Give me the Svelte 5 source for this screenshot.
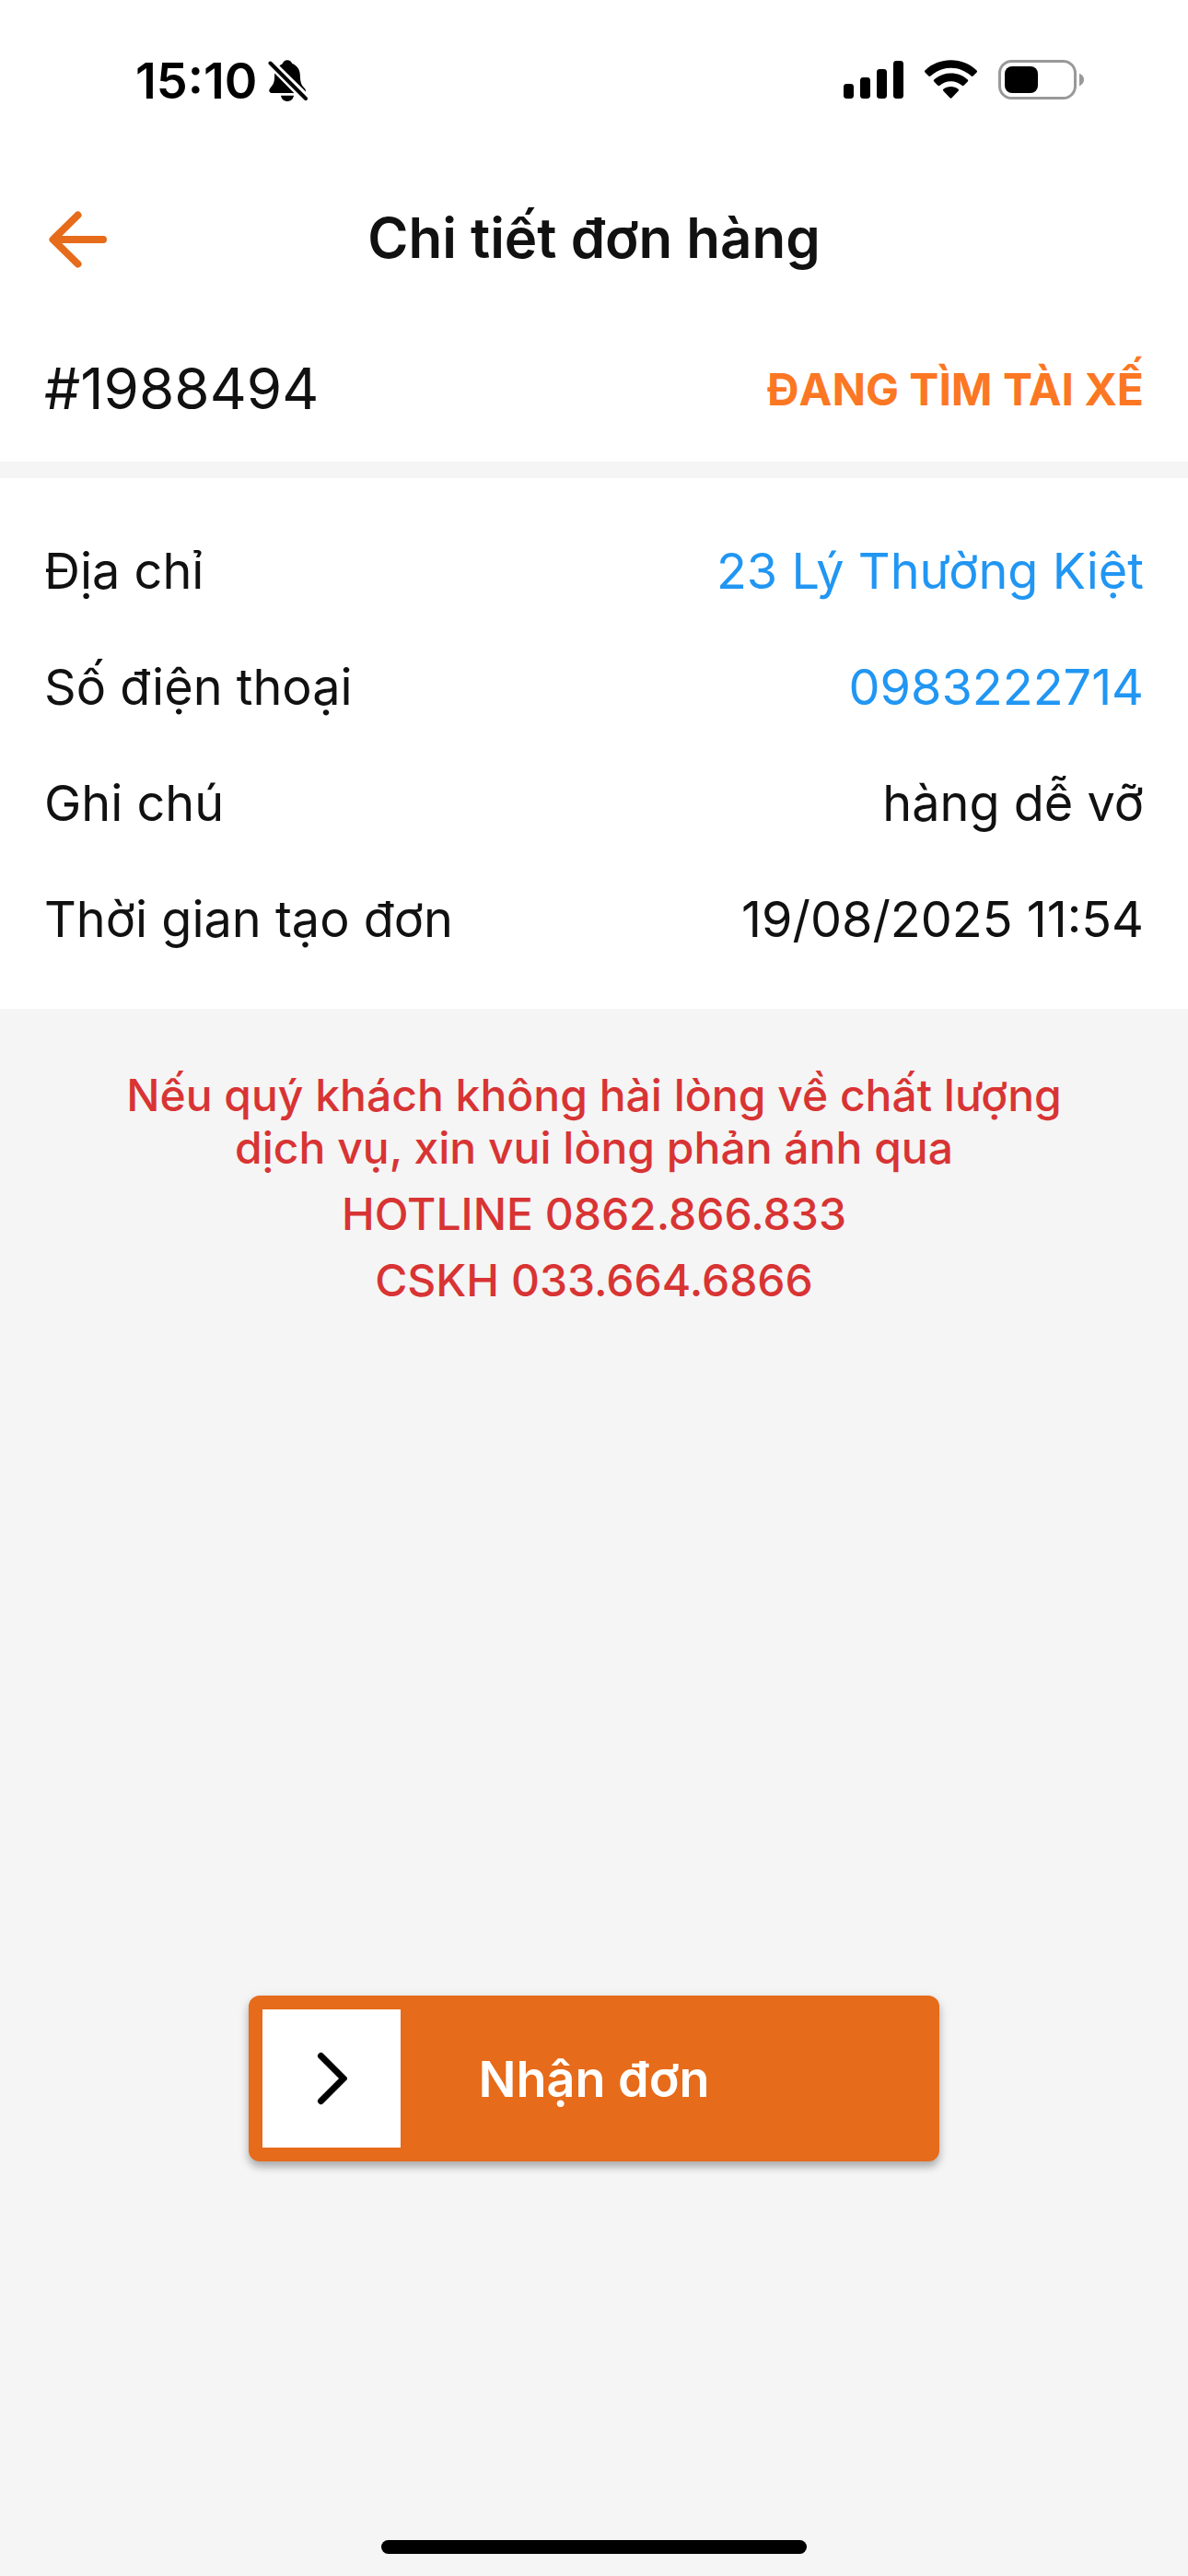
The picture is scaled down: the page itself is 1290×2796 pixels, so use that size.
<script lang="ts">
   interface OrderField {
      label: string;
      value: string;
      href?: string;
   }

   const orderId = "#1988494";
   const orderStatus = "ĐANG TÌM TÀI XẾ";

   const fields: OrderField[] = [
      { label: "Địa chỉ", value: "23 Lý Thường Kiệt", href: "#map" },
      { label: "Số điện thoại", value: "0983222714", href: "tel:0983222714" },
      { label: "Ghi chú", value: "hàng dễ vỡ" },
      { label: "Thời gian tạo đơn", value: "19/08/2025 11:54" },
   ];

   let accepted = $state(false);

   const goBack = (): void => history.back();
   const acceptOrder = (): void => {
      accepted = true;
   };
</script>

<div class="screen">
   <div class="status-bar">
      <div class="clock">
         <span>15:10</span>
         <svg width="44" height="48" viewBox="0 0 44 48" aria-hidden="true">
            <path
               d="M12.5 7.5 C14 6 15.2 5.6 15.8 5 C16.6 2.6 18.5 1.2 21 1.2 C23.5 1.2 25.4 2.6 26.2 5 C31.5 7 34.6 11.4 34.8 17 C35 23.5 35.6 27.5 38.5 30.5 C40.2 32.2 41.2 33.4 41 35.6 Z"
            />
            <path d="M7.2 15.6 L28.4 37 H4.4 C1.6 37 0.4 34.4 2 32.2 C4.4 29 6.6 27 7 21.5 Z" />
            <path d="M14 39.8 H28 C27.4 43.6 24.6 46 21 46 C17.4 46 14.6 43.6 14 39.8 Z" />
            <path d="M2.5 4.5 L41 43" class="slash" />
         </svg>
      </div>
      <div class="indicators">
         <svg width="66" height="44" viewBox="0 0 66 44" aria-hidden="true">
            <rect x="0" y="26" width="11" height="16" rx="3.4" />
            <rect x="18" y="19" width="11" height="23" rx="3.4" />
            <rect x="36" y="10" width="11" height="32" rx="3.4" />
            <rect x="54" y="1" width="11" height="41" rx="3.4" />
         </svg>
         <svg width="58" height="44" viewBox="0 0 58 44" aria-hidden="true">
            <path
               d="M28.5 0.2 C39.5 0.2 49.4 4.4 56.6 11.4 C57.2 12 57.2 12.8 56.6 13.4 L52.6 17.6 C52 18.2 51.2 18.2 50.6 17.6 C44.8 12.2 37.2 8.8 28.5 8.8 C19.8 8.8 12.2 12.2 6.4 17.6 C5.8 18.2 5 18.2 4.4 17.6 L0.4 13.4 C-0.2 12.8 -0.2 12 0.4 11.4 C7.6 4.4 17.5 0.2 28.5 0.2 Z"
            />
            <path
               d="M28.5 14.6 C35.6 14.6 42 17.2 46.8 21.6 C47.4 22.2 47.4 23 46.8 23.6 L42.6 27.8 C42 28.4 41.2 28.4 40.6 27.8 C37.4 25 33.2 23.2 28.5 23.2 C23.8 23.2 19.6 25 16.4 27.8 C15.8 28.4 15 28.4 14.4 27.8 L10.2 23.6 C9.6 23 9.6 22.2 10.2 21.6 C15 17.2 21.4 14.6 28.5 14.6 Z"
            />
            <path
               d="M28.5 29 C31.6 29 34.4 30 36.6 31.8 C37.2 32.4 37.2 33.2 36.6 33.8 L29.5 41.2 C28.9 41.8 28.1 41.8 27.5 41.2 L20.4 33.8 C19.8 33.2 19.8 32.4 20.4 31.8 C22.6 30 25.4 29 28.5 29 Z"
            />
         </svg>
         <svg width="94" height="44" viewBox="0 0 94 44" aria-hidden="true">
            <rect x="1.5" y="1.5" width="82" height="40" rx="13" class="battery-case" />
            <path d="M88 14.8 C91.4 16.2 93 18.4 93 21.5 C93 24.6 91.4 26.8 88 28.4 Z" class="battery-cap" />
            <rect x="7" y="7" width="36" height="29" rx="8" />
         </svg>
      </div>
   </div>

   <header>
      <button class="back" aria-label="Quay lại" onclick={goBack}>
         <svg width="64" height="62" viewBox="0 0 64 62" aria-hidden="true">
            <path d="M32.5 4.5 L5.5 31 L32.5 57.5 M7 31 H60" />
         </svg>
      </button>
      <h1>Chi tiết đơn hàng</h1>
   </header>

   <main>
      <section class="summary">
         <span class="order-id">{orderId}</span>
         <strong class="order-status">{orderStatus}</strong>
      </section>

      <dl class="details">
         {#each fields as { label, value, href }}
            <div class="row">
               <dt>{label}</dt>
               <dd>
                  {#if href}
                     <a {href}>{value}</a>
                  {:else}
                     {value}
                  {/if}
               </dd>
            </div>
         {/each}
      </dl>

      <div class="support">
         <p>Nếu quý khách không hài lòng về chất lượng dịch vụ, xin vui lòng phản ánh qua</p>
         <p>HOTLINE 0862.866.833</p>
         <p>CSKH 033.664.6866</p>
      </div>
   </main>

   <footer>
      <button class="accept" aria-pressed={accepted} onclick={acceptOrder}>
         <span class="thumb">
            <svg width="34" height="58" viewBox="0 0 34 58" aria-hidden="true">
               <path d="M5.5 4.5 L30 29 L5.5 53.5" />
            </svg>
         </span>
         <span class="accept-text">Nhận đơn</span>
      </button>
      <div class="home-indicator"></div>
   </footer>
</div>

<style>
   :global(body) {
      background: #f5f5f5;
   }

   .screen {
      display: flex;
      flex-direction: column;
      min-height: 100vh;
      color: #111;
      background: #f5f5f5;
      font-family: Inter, "Noto Sans", sans-serif;
   }

   .status-bar {
      display: flex;
      justify-content: space-between;
      align-items: center;
      height: 174px;
      box-sizing: border-box;
      padding: 0 112px 0 147px;
      color: #000;
      background: #fff;
   }

   .clock,
   .indicators {
      display: flex;
      align-items: center;
   }

   .clock {
      gap: 12px;
      padding-top: 2px;
      font-size: 54px;
      font-weight: 600;
      line-height: 66px;
   }

   .indicators {
      gap: 22px;
   }

   .slash {
      fill: none;
      stroke: #000;
      stroke-width: 4;
      stroke-linecap: round;
   }

   .battery-case {
      fill: none;
      stroke: #999;
      stroke-width: 3;
   }

   .battery-cap {
      fill: #999;
   }

   header {
      display: grid;
      grid-template-columns: 120px 1fr 120px;
      align-items: center;
      height: 168px;
      padding: 0 48px;
      background: #fff;
   }

   h1 {
      margin: 0;
      font-size: 60px;
      font-weight: 600;
      line-height: 72px;
      text-align: center;
   }

   button {
      border: 0;
      font: inherit;
      cursor: pointer;
   }

   .back {
      display: flex;
      justify-self: start;
      padding: 8px 4px 4px;
      background: none;
   }

   .back path {
      fill: none;
      stroke: #e66b1a;
      stroke-width: 8;
      stroke-linecap: round;
      stroke-linejoin: round;
   }

   .summary {
      display: flex;
      justify-content: space-between;
      align-items: center;
      height: 159px;
      padding: 0 48px;
      background: #fff;
   }

   .order-id {
      font-size: 62px;
      line-height: 72px;
   }

   .order-status {
      padding-top: 2px;
      color: #fc7723;
      font-size: 48px;
      font-weight: 700;
   }

   .details {
      margin: 18px 0 0;
      padding: 38px 48px 34px;
      background: #fff;
      font-size: 54px;
      font-weight: 400;
      line-height: 66px;
   }

   .row {
      display: flex;
      justify-content: space-between;
      padding: 30px 0;
   }

   dd {
      margin: 0;
      text-align: right;
   }

   a {
      color: #2196f3;
      text-decoration: none;
   }

   .support {
      display: flex;
      flex-direction: column;
      gap: 15px;
      max-width: 1050px;
      margin: 0 auto;
      padding: 65px 48px;
      color: #d83434;
      font-size: 48px;
      font-weight: 500;
      line-height: 57px;
      text-align: center;
   }

   .support p {
      margin: 0;
   }

   footer {
      display: flex;
      flex-direction: column;
      align-items: center;
      gap: 411px;
      margin-top: auto;
      padding-bottom: 24px;
   }

   .accept {
      display: grid;
      grid-template-columns: 150px 1fr 150px;
      align-items: center;
      width: 750px;
      max-width: 90%;
      padding: 15px;
      border-radius: 12px;
      color: #fff;
      background: #e66b1a;
      box-shadow:
         0 6px 8px rgba(0, 0, 0, 0.26),
         0 3px 15px rgba(0, 0, 0, 0.08);
   }

   .thumb {
      display: flex;
      justify-content: center;
      align-items: center;
      height: 150px;
      background: #fff;
   }

   .thumb path {
      fill: none;
      stroke: #000;
      stroke-width: 7;
      stroke-linecap: round;
   }

   .accept-text {
      padding-top: 2px;
      font-size: 54px;
      font-weight: 600;
      line-height: 66px;
   }

   .home-indicator {
      width: 462px;
      height: 15px;
      border-radius: 8px;
      background: #000;
   }
</style>
